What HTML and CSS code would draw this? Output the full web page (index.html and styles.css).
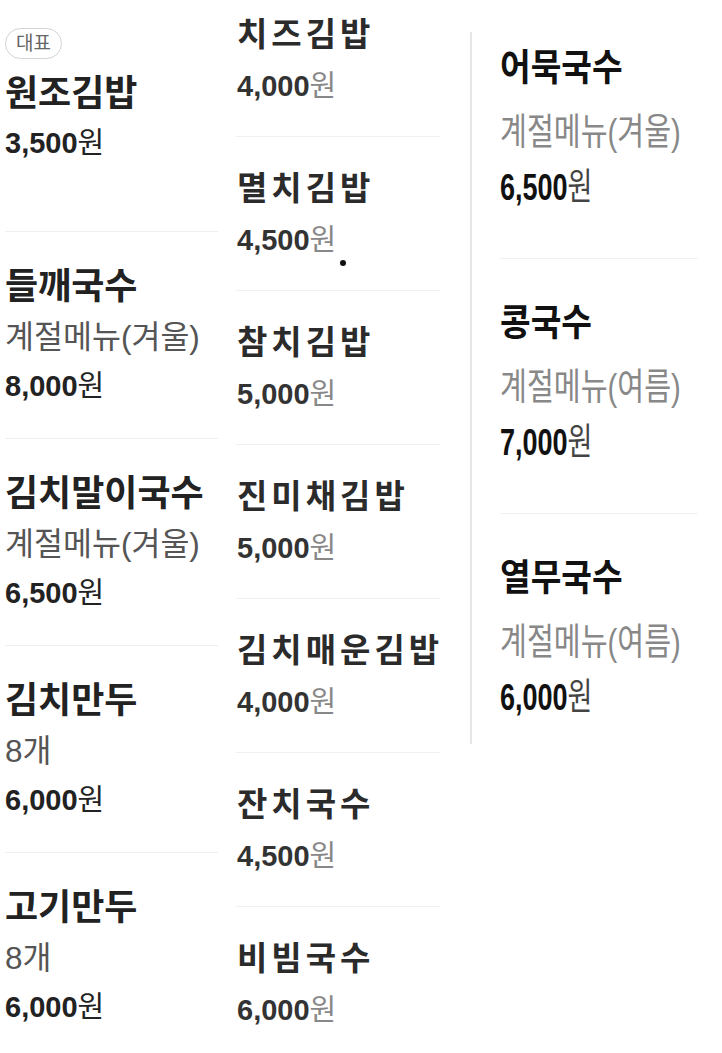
FILE: index.html
```html
<!DOCTYPE html>
<html lang="ko">
  <head>
    <meta charset="UTF-8" />
    <meta name="viewport" content="width=device-width, initial-scale=1.0" />
    <title>메뉴</title>
    <link rel="stylesheet" href="styles.css">
  </head>

  <body>
    <div class="menu">
      <!-- left column -->
      <div class="col col-left">
        <div class="item item-first">
          <span class="badge">대표</span>
          <div class="name">원조김밥</div>
          <div class="price">3,500<span class="won">원</span></div>
        </div>
        <div class="item">
          <div class="name">들깨국수</div>
          <div class="desc">계절메뉴(겨울)</div>
          <div class="price">8,000<span class="won">원</span></div>
        </div>
        <div class="item">
          <div class="name">김치말이국수</div>
          <div class="desc">계절메뉴(겨울)</div>
          <div class="price">6,500<span class="won">원</span></div>
        </div>
        <div class="item">
          <div class="name">김치만두</div>
          <div class="desc">8개</div>
          <div class="price">6,000<span class="won">원</span></div>
        </div>
        <div class="item">
          <div class="name">고기만두</div>
          <div class="desc">8개</div>
          <div class="price">6,000<span class="won">원</span></div>
        </div>
      </div>

      <!-- middle column -->
      <div class="col col-mid">
        <div class="item">
          <div class="name">치즈김밥</div>
          <div class="price">4,000<span class="won">원</span></div>
        </div>
        <div class="item">
          <div class="name">멸치김밥</div>
          <div class="price">4,500<span class="won">원</span></div>
          <span class="dot"></span>
        </div>
        <div class="item">
          <div class="name">참치김밥</div>
          <div class="price">5,000<span class="won">원</span></div>
        </div>
        <div class="item">
          <div class="name">진미채김밥</div>
          <div class="price">5,000<span class="won">원</span></div>
        </div>
        <div class="item">
          <div class="name">김치매운김밥</div>
          <div class="price">4,000<span class="won">원</span></div>
        </div>
        <div class="item">
          <div class="name">잔치국수</div>
          <div class="price">4,500<span class="won">원</span></div>
        </div>
        <div class="item">
          <div class="name">비빔국수</div>
          <div class="price">6,000<span class="won">원</span></div>
        </div>
      </div>

      <!-- right column -->
      <div class="col col-right">
        <div class="item">
          <div class="name">어묵국수</div>
          <div class="desc">계절메뉴(겨울)</div>
          <div class="price">6,500<span class="won">원</span></div>
        </div>
        <div class="item">
          <div class="name">콩국수</div>
          <div class="desc">계절메뉴(여름)</div>
          <div class="price">7,000<span class="won">원</span></div>
        </div>
        <div class="item">
          <div class="name">열무국수</div>
          <div class="desc">계절메뉴(여름)</div>
          <div class="price">6,000<span class="won">원</span></div>
        </div>
      </div>
    </div>
  </body>
</html>
```

FILE: styles.css
```css
body {
  margin: 0;
  padding: 0;
  background: #fff;
  color: #222;
  font-family: "Liberation Sans", "Noto Sans CJK KR", sans-serif;
}

.menu {
  display: flex;
  align-items: flex-start;
}

.name {
  font-size: 36px;
  font-weight: 700;
  line-height: 49px;
  white-space: nowrap;
}

.desc {
  font-size: 31.5px;
  line-height: 52px;
  color: #555;
  white-space: nowrap;
}

.price {
  font-size: 29px;
  font-weight: 700;
  line-height: 46px;
  white-space: nowrap;
}

.won {
  font-weight: 400;
}

/* left column */
.col-left {
  margin-left: 5px;
  width: 213px;
}

.col-left .item {
  padding: 30px 0 29px;
  border-bottom: 1px solid #efefef;
}

.col-left .item:last-child {
  border-bottom: none;
}

.col-left .item-first {
  padding-top: 28px;
  padding-bottom: 65px;
}

.col-left .item-first .price {
  margin-top: 2px;
}

.badge {
  display: inline-block;
  height: 29px;
  padding: 0 10px;
  border: 1px solid #d4d4d4;
  border-radius: 16px;
  font-size: 19px;
  line-height: 29px;
  color: #666;
  margin-bottom: 10px;
}

/* middle column */
.col-mid {
  margin-left: 18px;
  width: 204px;
}

.col-mid .item {
  position: relative;
  padding: 26px 0 25px 1px;
  border-bottom: 1px solid #f0f0f0;
}

.col-mid .item:first-child {
  padding-top: 9px;
}

.col-mid .item:last-child {
  border-bottom: none;
}

.col-mid .name {
  font-size: 33px;
  line-height: 52px;
  letter-spacing: 4px;
  color: #2b2b2b;
}

.col-mid .price {
  line-height: 50px;
  color: #333;
}

.col-mid .won {
  color: #888;
}

.dot {
  position: absolute;
  left: 104px;
  top: 123px;
  width: 6px;
  height: 6px;
  border-radius: 50%;
  background: #111;
}

/* right column */
.col-right {
  margin-left: 30px;
  margin-top: 32px;
  padding-left: 28px;
  width: 198px;
  border-left: 2px solid #e6e6e6;
}

.col-right .item {
  padding: 34px 0 48px;
  border-bottom: 1px solid #f0f0f0;
}

.col-right .item:first-child {
  padding-top: 6px;
}

.col-right .item:last-child {
  border-bottom: none;
  padding-bottom: 24px;
}

.col-right .name,
.col-right .desc,
.col-right .price {
  font-size: 37px;
  transform-origin: left center;
}

.col-right .name {
  line-height: 62px;
  color: #111;
  transform: scaleX(0.9);
}

.col-right .desc {
  line-height: 66px;
  color: #888;
  transform: scaleX(0.79);
}

.col-right .price {
  line-height: 44px;
  color: #111;
  transform: scaleX(0.73);
}

.col-right .won {
  color: #444;
}
```
